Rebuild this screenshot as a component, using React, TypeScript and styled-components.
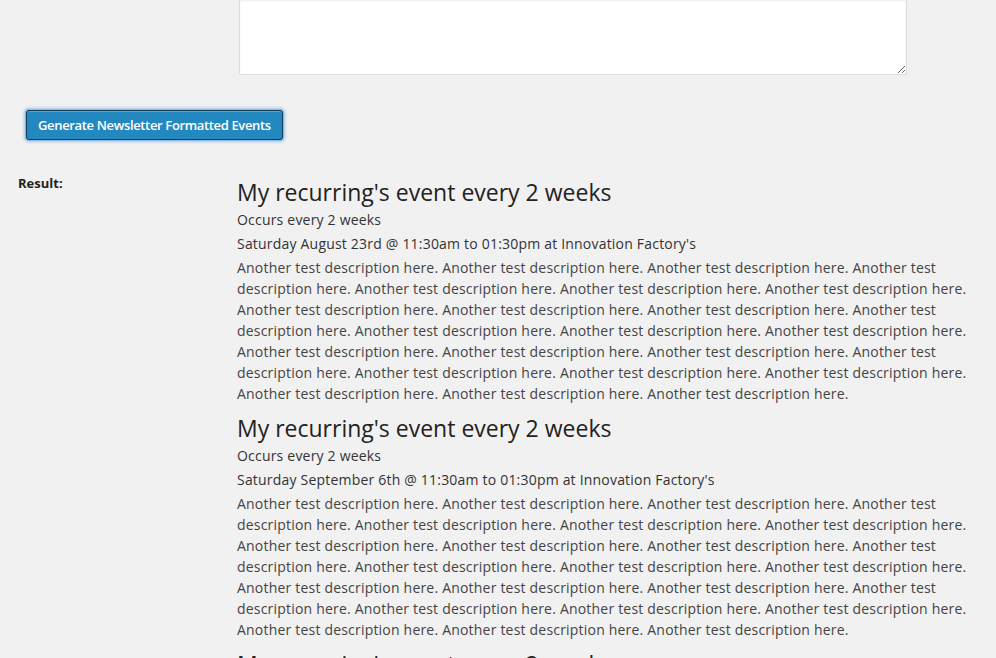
import styled, { createGlobalStyle } from "styled-components";

const GlobalStyle = createGlobalStyle`
  html, body {
    margin: 0;
    padding: 0;
    background: #f1f1f1;
  }
  body {
    font-family: "Open Sans", sans-serif;
    color: #444;
    overflow: hidden;
  }
`;

const Page = styled.div`
  padding: 0 20px 0 18px;
`;

const FieldRow = styled.div`
  display: grid;
  grid-template-columns: 221px 668px;
`;

const Notes = styled.textarea`
  grid-column: 2;
  display: block;
  box-sizing: border-box;
  width: 668px;
  height: 75px;
  margin: 0;
  border: 1px solid #ddd;
  border-top: none;
  background: #fff;
  box-shadow: inset 0 1px 2px rgba(0, 0, 0, 0.07);
  font-family: "Open Sans", sans-serif;
`;

const Actions = styled.div`
  padding: 35px 0 0 8px;
`;

const PrimaryButton = styled.button`
  height: 30px;
  padding: 0 11px 1px;
  border: 1px solid #143a55;
  border-radius: 3px;
  background: #2488c0;
  color: #fff;
  font-family: "Open Sans", sans-serif;
  font-size: 13px;
  font-weight: 600;
  letter-spacing: -0.35px;
  box-shadow: 0 0 0 1px #8cbbe6, 0 0 3px 2px rgba(90, 160, 220, 0.55),
    inset 0 1px 0 rgba(120, 200, 230, 0.5);
  cursor: pointer;
`;

const ResultRow = styled.div`
  display: grid;
  grid-template-columns: 219px 1fr;
  margin-top: 35px;
`;

const Label = styled.div`
  font-size: 13px;
  font-weight: 700;
  color: #222;
  line-height: 17px;
`;

const EventList = styled.div`
  padding-top: 2px;
`;

const EventBlock = styled.div`
  margin-bottom: 9px;
`;

const EventTitle = styled.h2`
  margin: 0;
  font-size: 23px;
  font-weight: 400;
  line-height: 30px;
  color: #222;
`;

const MetaLine = styled.p<{ gap?: number }>`
  margin: ${(p) => p.gap ?? 0}px 0 0;
  font-size: 14px;
  letter-spacing: 0.2px;
  line-height: 24px;
  color: #333;
`;

const Description = styled.p`
  margin: 1px 0 0;
  font-size: 14px;
  letter-spacing: 0.2px;
  line-height: 21px;
  color: #444;
  max-width: 745px;
`;

const events = [
  { title: "My recurring's event every 2 weeks", when: "Saturday August 23rd @ 11:30am to 01:30pm at Innovation Factory's" },
  { title: "My recurring's event every 2 weeks", when: "Saturday September 6th @ 11:30am to 01:30pm at Innovation Factory's" },
  { title: "My recurring's event every 2 weeks", when: "Saturday September 20th @ 11:30am to 01:30pm at Innovation Factory's" },
];

const description = Array(24).fill("Another test description here.").join(" ");

export default function App() {
  return (
    <>
      <GlobalStyle />
      <Page>
        <FieldRow>
          <Notes defaultValue="" />
        </FieldRow>
        <Actions>
          <PrimaryButton type="button">Generate Newsletter Formatted Events</PrimaryButton>
        </Actions>
        <ResultRow>
          <Label>Result:</Label>
          <EventList>
            {events.map((ev, i) => (
              <EventBlock key={i}>
                <EventTitle>{ev.title}</EventTitle>
                <MetaLine gap={1}>Occurs every 2 weeks</MetaLine>
                <MetaLine>{ev.when}</MetaLine>
                <Description>{description}</Description>
              </EventBlock>
            ))}
          </EventList>
        </ResultRow>
      </Page>
    </>
  );
}
